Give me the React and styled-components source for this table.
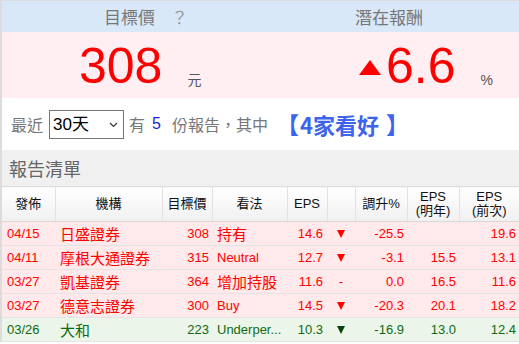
import React from 'react';
import styled, { createGlobalStyle } from 'styled-components';

const GlobalStyle = createGlobalStyle`
    body {
        margin: 0;
        background: #fff;
    }
`;

const reports = [
    { date: '04/15', broker: '日盛證券', target: 308, view: '持有', cjk: true, eps: '14.6', dir: 'down', pct: '-25.5', next: '', prev: '19.6', tone: 'bull' },
    { date: '04/11', broker: '摩根大通證券', target: 315, view: 'Neutral', eps: '12.7', dir: 'down', pct: '-3.1', next: '15.5', prev: '13.1', tone: 'bull' },
    { date: '03/27', broker: '凱基證券', target: 364, view: '增加持股', cjk: true, eps: '11.6', dir: 'flat', pct: '0.0', next: '16.5', prev: '11.6', tone: 'bull' },
    { date: '03/27', broker: '德意志證券', target: 300, view: 'Buy', eps: '14.5', dir: 'down', pct: '-20.3', next: '20.1', prev: '18.2', tone: 'bull' },
    { date: '03/26', broker: '大和', target: 223, view: 'Underper...', eps: '10.3', dir: 'down', pct: '-16.9', next: '13.0', prev: '12.4', tone: 'bear' },
];

function App() {
    return (
        <Page>
            <GlobalStyle />
            <Summary>
                <SummaryHead $pad="102px">
                    目標價<Help>？</Help>
                </SummaryHead>
                <SummaryHead $center>潛在報酬</SummaryHead>
                <SummaryValue $pad="77px">
                    <BigNumber>308</BigNumber>
                    <Unit>元</Unit>
                </SummaryValue>
                <SummaryValue $pad="100px">
                    <UpMark />
                    <BigNumber>6.6</BigNumber>
                    <Unit>%</Unit>
                </SummaryValue>
            </Summary>

            <FilterRow>
                <Label>最近</Label>
                <SelectWrap>
                    <Select defaultValue="30">
                        <option value="30">30天</option>
                        <option value="90">90天</option>
                    </Select>
                    <Chevron width="9" height="6" viewBox="0 0 9 6">
                        <path d="M1 1l3.5 3.5L8 1" fill="none" stroke="#333" strokeWidth="1.2" />
                    </Chevron>
                </SelectWrap>
                <Label>有</Label>
                <Count>5</Count>
                <Label>份報告，其中</Label>
                <Highlight>
                    <Bracket $open>【</Bracket>
                    4家看好
                    <Bracket>】</Bracket>
                </Highlight>
            </FilterRow>

            <SectionTitle>報告清單</SectionTitle>

            <Table>
                <colgroup>
                    <col style={{ width: 53 }} />
                    <col style={{ width: 107 }} />
                    <col style={{ width: 50 }} />
                    <col style={{ width: 75 }} />
                    <col style={{ width: 40 }} />
                    <col style={{ width: 28 }} />
                    <col style={{ width: 52 }} />
                    <col style={{ width: 52 }} />
                    <col style={{ width: 60 }} />
                </colgroup>
                <thead>
                    <tr>
                        <Th>發佈</Th>
                        <Th>機構</Th>
                        <Th>目標價</Th>
                        <Th>看法</Th>
                        <Th>EPS</Th>
                        <Th></Th>
                        <Th>調升%</Th>
                        <Th>EPS<br />(明年)</Th>
                        <Th $last>EPS<br />(前次)</Th>
                    </tr>
                </thead>
                <tbody>
                    {reports.map((r, i) => (
                        <Row key={i} $tone={r.tone}>
                            <Td $pl="5px">{r.date}</Td>
                            <Td $pl="5px" $cjk>{r.broker}</Td>
                            <Td $align="right" $pr="3px">{r.target}</Td>
                            <Td $pl="5px" $cjk={r.cjk}>{r.view}</Td>
                            <Td $align="right" $pr="4px">{r.eps}</Td>
                            <Td $align="center">
                                {r.dir === 'down' ? <DownMark $tone={r.tone} /> : '-'}
                            </Td>
                            <Td $align="right" $pr="3px">{r.pct}</Td>
                            <Td $align="right" $pr="3px">{r.next}</Td>
                            <Td $align="right" $pr="3px">{r.prev}</Td>
                        </Row>
                    ))}
                </tbody>
            </Table>
        </Page>
    );
}

const Page = styled.div`
    width: 517px;
    border-left: 2px solid #dcdcdc;
    border-top: 1px solid #dcdcdc;
    font-family: "Liberation Sans", "Noto Sans CJK TC", sans-serif;
`;

const Summary = styled.div`
    display: grid;
    grid-template-columns: 257px 260px;
    grid-template-rows: 31px 66px;
`;

const SummaryHead = styled.div`
    display: flex;
    align-items: center;
    justify-content: ${p => (p.$center ? 'center' : 'flex-start')};
    padding-left: ${p => p.$pad || '0'};
    background: #d9e8f8;
    color: #777;
    font-size: 17px;
    line-height: 20px;
    font-family: "Noto Sans CJK TC", sans-serif;
`;

const Help = styled.span`
    margin-left: 16px;
    color: #999;
`;

const SummaryValue = styled.div`
    display: flex;
    align-items: flex-end;
    padding-left: ${p => p.$pad};
    padding-bottom: 7px;
    background: #ffeef2;
`;

const BigNumber = styled.span`
    font-size: 50px;
    line-height: 50px;
    color: #ff0000;
`;

const Unit = styled.span`
    margin-left: 25px;
    margin-bottom: 4px;
    font-size: 14px;
    line-height: 14px;
    color: #555;
    font-family: "Liberation Sans", "Noto Sans CJK TC", sans-serif;
`;

const UpMark = styled.span`
    width: 0;
    height: 0;
    margin-right: 5px;
    margin-bottom: 16px;
    border-left: 11.5px solid transparent;
    border-right: 11.5px solid transparent;
    border-bottom: 15px solid #ff0000;
`;

const FilterRow = styled.div`
    display: flex;
    align-items: center;
    height: 52px;
    padding-left: 9px;
    font-family: "Noto Sans CJK TC", sans-serif;
    font-size: 16px;
    color: #777;
`;

const Label = styled.span`
    line-height: 20px;
`;

const SelectWrap = styled.div`
    position: relative;
    margin: 0 5px 0 6px;
`;

const Select = styled.select`
    appearance: none;
    width: 75px;
    height: 29px;
    padding: 0 0 0 3px;
    border: 1px solid #767676;
    border-radius: 0;
    background: #fff;
    color: #000;
    font-family: "Liberation Sans", "Noto Sans CJK TC", sans-serif;
    font-size: 17px;
    outline: none;
`;

const Chevron = styled.svg`
    position: absolute;
    right: 6px;
    top: 12px;
    pointer-events: none;
`;

const Count = styled.span`
    margin: 0 11px 0 7px;
    color: #1b1be0;
    font-family: "Liberation Sans", sans-serif;
    font-size: 16px;
`;

const Highlight = styled.span`
    display: flex;
    align-items: center;
    margin-left: 6px;
    color: #3d63ef;
    font-size: 22px;
    font-weight: 700;
    line-height: 26px;
`;

const Bracket = styled.span`
    margin: ${p => (p.$open ? '0 1px 0 2px' : '0 0 0 7px')};
    font-size: 23px;
`;

const SectionTitle = styled.div`
    display: flex;
    align-items: center;
    height: 36px;
    padding-left: 7px;
    background: #f0f0f0;
    color: #666;
    font-family: "Noto Sans CJK TC", sans-serif;
    font-size: 18px;
`;

const Table = styled.table`
    width: 517px;
    table-layout: fixed;
    border-collapse: collapse;
    border-top: 1px solid #dcdcdc;
`;

const Th = styled.th`
    height: 34px;
    padding: 0;
    border-right: ${p => (p.$last ? 'none' : '1px solid #e2e2e2')};
    border-bottom: 1px solid #d8d8d8;
    background: linear-gradient(#ffffff, #f0f0f0);
    color: #111;
    font-family: "Liberation Sans", "Noto Sans CJK TC", sans-serif;
    font-size: 13px;
    font-weight: 400;
    line-height: 14px;
    text-align: center;
`;

const Row = styled.tr`
    background: ${p => (p.$tone === 'bear' ? '#ebf5ea' : '#ffe9ea')};
    color: ${p => (p.$tone === 'bear' ? '#106a10' : '#ff0000')};
    border-bottom: 1px solid #e4e4e4;
`;

const Td = styled.td`
    height: 23px;
    padding: 0 ${p => p.$pr || '0'} 0 ${p => p.$pl || '0'};
    text-align: ${p => p.$align || 'left'};
    font-size: ${p => (p.$cjk ? '15px' : '13px')};
    font-family: ${p => (p.$cjk ? '"Noto Sans CJK TC", sans-serif' : '"Liberation Sans", sans-serif')};
    line-height: 18px;
    white-space: nowrap;
    overflow: hidden;
`;

const DownMark = styled.span`
    display: inline-block;
    width: 0;
    height: 0;
    border-left: 4.5px solid transparent;
    border-right: 4.5px solid transparent;
    border-top: 8px solid ${p => (p.$tone === 'bear' ? '#0e3f0e' : '#ff0000')};
`;

export default App;
